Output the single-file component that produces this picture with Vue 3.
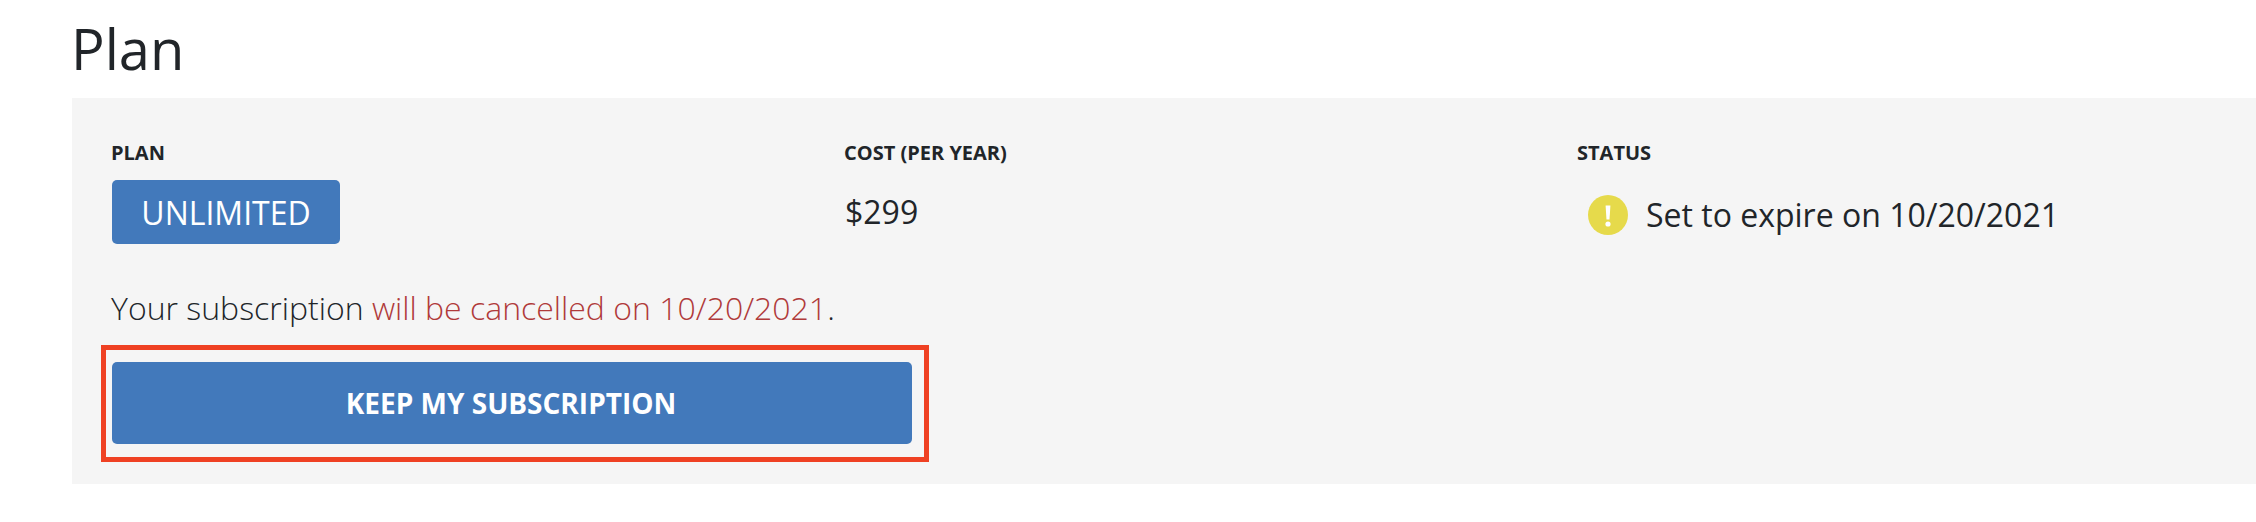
<template>
  <div class="page">
    <h1 class="title">Plan</h1>
    <section class="panel">
      <div class="columns">
        <div class="col">
          <div class="label">PLAN</div>
          <span class="badge">UNLIMITED</span>
        </div>
        <div class="col">
          <div class="label">COST (PER YEAR)</div>
          <div class="value">$299</div>
        </div>
        <div class="col">
          <div class="label">STATUS</div>
          <div class="status">
            <svg class="status-icon" viewBox="0 0 40 40">
              <circle cx="20" cy="20" r="20" fill="#e6da4b" />
              <path d="M17.6 10.5h4.8l-0.9 14h-3z" fill="#fff" />
              <circle cx="20" cy="29" r="2.6" fill="#fff" />
            </svg>
            <span>Set to expire on 10/20/2021</span>
          </div>
        </div>
      </div>
      <p class="note">Your subscription <span class="warn">will be cancelled on 10/20/2021</span>.</p>
      <div class="highlight">
        <button class="keep" type="button">KEEP MY SUBSCRIPTION</button>
      </div>
    </section>
  </div>
</template>

<script setup>
</script>

<style>
html, body {
  background: #fff;
}
</style>

<style scoped>
.page {
  width: 2256px;
  height: 522px;
  overflow: hidden;
  font-family: "Open Sans", sans-serif;
  color: #212529;
}

.title {
  margin: 0;
  height: 98px;
  padding: 10px 0 0 71px;
  box-sizing: border-box;
  font-size: 56px;
  font-weight: 400;
  line-height: 76px;
}

.panel {
  margin-left: 72px;
  height: 386px;
  padding: 43px 40px 0;
  box-sizing: border-box;
  background: #f5f5f5;
}

.columns {
  display: grid;
  grid-template-columns: 733px 733px 1fr;
}

.label {
  font-size: 20px;
  font-weight: 700;
  line-height: 24px;
  margin: 0 0 15px -1px;
}

.badge {
  display: inline-flex;
  align-items: center;
  justify-content: center;
  width: 228px;
  height: 64px;
  border-radius: 5px;
  background: #4279bb;
  color: #fff;
  font-size: 32px;
}

.value {
  font-size: 32px;
  line-height: 44px;
  margin-top: 25px;
}

.status {
  display: flex;
  align-items: center;
  gap: 18px;
  padding-left: 10px;
  font-size: 32px;
  line-height: 44px;
  margin-top: 28px;
}

.status-icon {
  width: 40px;
  height: 40px;
  flex: none;
}

.note {
  margin: 42px 0 0 -1px;
  font-size: 32px;
  line-height: 44px;
  font-weight: 300;
}

.warn {
  color: #b03a3a;
}

.highlight {
  width: 828px;
  height: 117px;
  margin: 15px 0 0 -11px;
  padding: 12px 12px 12px 6px;
  box-sizing: border-box;
  border: 5px solid #ef4123;
}

.keep {
  display: block;
  width: 100%;
  height: 82px;
  padding: 0 2px 0 0;
  border: none;
  border-radius: 5px;
  background: #4279bb;
  color: #fff;
  font-family: inherit;
  font-size: 28px;
  font-weight: 700;
}
</style>
